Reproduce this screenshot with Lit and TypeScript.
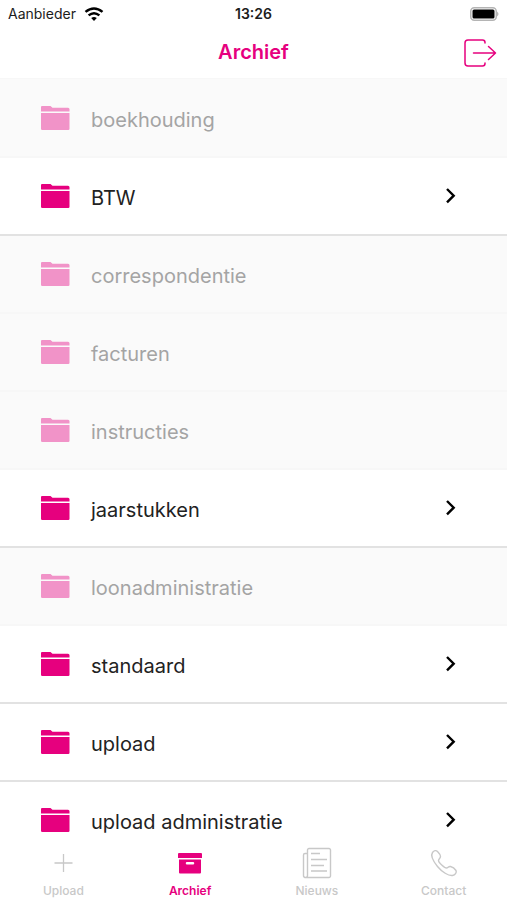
import { LitElement, html, css, svg } from "lit";
import { customElement, property, state } from "lit/decorators.js";
import { classMap } from "lit/directives/class-map.js";

interface Folder {
  name: string;
  empty: boolean;
}

const FOLDERS: Folder[] = [
  { name: "boekhouding", empty: true },
  { name: "BTW", empty: false },
  { name: "correspondentie", empty: true },
  { name: "facturen", empty: true },
  { name: "instructies", empty: true },
  { name: "jaarstukken", empty: false },
  { name: "loonadministratie", empty: true },
  { name: "standaard", empty: false },
  { name: "upload", empty: false },
  { name: "upload administratie", empty: false },
];

const TABS = [
  {
    label: "Upload",
    icon: svg`<path d="M16.500 7v18M7.500 16h18" fill="none" stroke="currentColor" stroke-width="1.3"/>`,
  },
  {
    label: "Archief",
    icon: svg`<path d="M5 6h22a1 1 0 0 1 1 1v4h-24V7a1 1 0 0 1 1-1z"/><path fill-rule="evenodd" d="M5 12.500h22v13a1 1 0 0 1-1 1H6a1 1 0 0 1-1-1zM13 15a1 1 0 0 0 0 2.500h6a1 1 0 0 0 0-2.500z"/>`,
  },
  {
    label: "Nieuws",
    icon: svg`<g fill="none" stroke="currentColor" stroke-width="1.400" stroke-linejoin="round"><path d="M5 30.500h23a1.500 1.500 0 0 0 1.500-1.500V3a1.500 1.500 0 0 0-1.500-1.500H8A1.500 1.500 0 0 0 6.500 3V28.500a2 2 0 0 1-4 0V8A1.500 1.500 0 0 1 4 6.500h2.500M2.500 28.500a2 2 0 0 0 2.500 2"/><path d="M10 6.500h9M10 12.500h16M10 18.500h13M10 24h16"/></g>`,
  },
  {
    label: "Contact",
    icon: svg`<path fill="none" stroke="currentColor" stroke-width="1.400" stroke-linejoin="round" d="M4.500 5.500C6 3.500 8 3 9.500 4.500C11 6 12.500 8 12.500 9.500C12.500 11.500 10.500 12 10.500 13.500C10.500 15.500 16.500 21 18.500 21C20 21 20.500 19 22.500 19.500C24.500 20 27 22 28 23.500C29 25.500 27 28 24.500 28.500C20.500 29 14 25 9.500 19.500C5.500 14.500 2 9 4.500 5.500Z"/>`,
  },
];

@customElement("status-bar")
class StatusBar extends LitElement {
  static styles = css`
    :host {
      display: grid;
      grid-template-columns: 1fr auto 1fr;
      align-items: center;
      height: 28px;
      padding: 0 8px;
      color: #1c1c1c;
      font-size: 14px;
      line-height: 20px;
    }
    .carrier {
      display: flex;
      align-items: center;
      gap: 8px;
    }
    .time {
      font-weight: 600;
    }
    .battery {
      justify-self: end;
    }
    svg {
      display: block;
    }
  `;

  render() {
    return html`
      <span class="carrier">
        Aanbieder
        <svg width="20" height="14" viewBox="0 0 20 14" fill="none" stroke="#000" stroke-width="2.5" role="img" aria-label="Wifi">
          <path d="M1.500 4.900Q10-2 18.500 4.900" />
          <path d="M4.600 8.400Q10 4 15.400 8.400" />
          <path d="M10 14L7.200 11Q10 8.900 12.800 11Z" fill="#000" stroke="none" />
        </svg>
      </span>
      <time class="time">13:26</time>
      <svg class="battery" width="30" height="14" viewBox="0 0 30 14" role="img" aria-label="Batterij vol">
        <rect x="1.750" y=".75" width="25.500" height="12.500" rx="3.500" fill="#fff" stroke="#b4b4b4" stroke-width="1.500" />
        <rect x="3.500" y="2.500" width="22" height="9" rx="1.500" />
        <path d="M28.200 4.500q2.500 2.500 0 5z" fill="#aaa" />
      </svg>
    `;
  }
}

@customElement("folder-row")
class FolderRow extends LitElement {
  @property() name = "";
  @property({ type: Boolean }) empty = false;

  static styles = css`
    :host {
      display: block;
    }
    button {
      display: flex;
      align-items: center;
      box-sizing: border-box;
      width: 100%;
      height: 78px;
      padding: 0 50px 0 40px;
      border: 0;
      border-bottom: 2px solid #e2e2e2;
      background: #fff;
      color: #222;
      font: inherit;
      font-size: 20px;
      font-weight: 400;
      line-height: 28px;
      text-align: left;
    }
    button:disabled {
      border-bottom-color: #f7f7f7;
      background: #fafafa;
      color: #a4a4a4;
    }
    .folder {
      flex: none;
      margin-right: 21px;
      fill: #e6007e;
    }
    button:disabled .folder {
      fill: #f193c8;
    }
    .name {
      flex: 1;
      padding-top: 3px;
    }
  `;

  render() {
    return html`
      <button ?disabled=${this.empty}>
        <svg class="folder" width="30" height="26" viewBox="0 0 30 26" aria-hidden="true">
          <path d="M2 1h8.500l2 1.700H28a1.500 1.500 0 0 1 1.500 1.500V6.500H1V2a1 1 0 0 1 1-1z" />
          <path d="M1 8h28.500V23.800a1.200 1.200 0 0 1-1.200 1.200H2.200A1.200 1.200 0 0 1 1 23.800z" />
        </svg>
        <span class="name">${this.name}</span>
        ${this.empty
          ? ""
          : html`<svg width="12" height="18" viewBox="0 0 12 18" fill="none" stroke="#000" stroke-width="2.4" aria-hidden="true">
              <path d="M2 2L8.700 8.700L2 15.400" />
            </svg>`}
      </button>
    `;
  }
}

@customElement("app-root")
class AppRoot extends LitElement {
  @state() private active = "Archief";

  static styles = css`
    :host {
      display: flex;
      flex-direction: column;
      height: 100vh;
      overflow: hidden;
      background: #fff;
      font-family: Inter, "Liberation Sans", sans-serif;
    }
    header {
      display: grid;
      grid-template-columns: 1fr auto 1fr;
      align-items: center;
      flex: none;
      height: 50px;
      padding: 0 10px;
      border-bottom: 1px solid #f7f7f7;
    }
    h1 {
      grid-column: 2;
      margin: 0;
      padding-bottom: 2px;
      color: #e6007e;
      font-size: 20px;
      font-weight: 600;
      line-height: 28px;
    }
    .logout {
      justify-self: end;
      padding: 0;
      border: 0;
      background: none;
      color: #e6007e;
    }
    svg {
      display: block;
    }
    ul {
      flex: 1;
      min-height: 0;
      margin: 0;
      padding: 0;
      overflow-y: auto;
      scrollbar-width: none;
      list-style: none;
    }
    li:first-child {
      padding-top: 1px;
      background: #fafafa;
    }
    nav {
      display: grid;
      grid-template-columns: repeat(4, 1fr);
      flex: none;
      padding-top: 5px;
      background: #fff;
    }
    .tab {
      display: flex;
      flex-direction: column;
      align-items: center;
      gap: 3px;
      padding: 0;
      border: 0;
      background: none;
      color: #c8c8c8;
      font: inherit;
      font-size: 12px;
      font-weight: 500;
      line-height: 18px;
    }
    .tab svg {
      fill: currentColor;
    }
    .tab.active {
      color: #e6007e;
      font-weight: 600;
    }
  `;

  render() {
    return html`
      <status-bar></status-bar>
      <header>
        <h1>Archief</h1>
        <button class="logout" aria-label="Uitloggen">
          <svg width="34" height="30" viewBox="0 0 34 30" fill="none" stroke="currentColor" stroke-width="1.5" stroke-linecap="round" stroke-linejoin="round">
            <path d="M22 5V4.500Q22 2 19.500 2H5Q2 2 2 5V25Q2 28 5 28H19.500Q22 28 22 25.500V25" />
            <path d="M10.500 15H32.500M25.500 8.500L32.500 15L25.500 21.500" />
          </svg>
        </button>
      </header>
      <ul>
        ${FOLDERS.map(
          (f) => html`<li><folder-row .name=${f.name} .empty=${f.empty}></folder-row></li>`
        )}
      </ul>
      <nav>
        ${TABS.map(
          (t) => html`<button
            class=${classMap({ tab: true, active: t.label === this.active })}
            @click=${() => (this.active = t.label)}
          >
            <svg width="32" height="32" viewBox="0 0 32 32" aria-hidden="true">${t.icon}</svg>
            ${t.label}
          </button>`
        )}
      </nav>
    `;
  }
}
